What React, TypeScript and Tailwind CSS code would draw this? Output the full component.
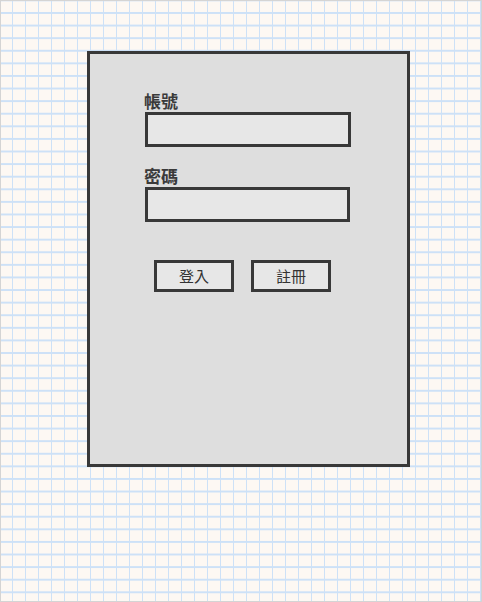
const FONT = "font-['Liberation_Sans','Noto_Sans_CJK_TC',sans-serif]";

function Field({ label, className, w }: { label: string; className?: string; w: string }) {
  return (
    <div className={"flex flex-col " + (className ?? "")}>
      <div className="text-[17px] leading-[16px] font-bold text-[#3a3a3a] mb-px -ml-px">{label}</div>
      <div className={w + " h-[35px] border-[3px] border-[#383838] bg-[#e7e7e7]"} />
    </div>
  );
}

function Btn({ label }: { label: string }) {
  return (
    <button
      type="button"
      className="w-[80px] h-[32px] border-[3px] border-[#383838] bg-[#e7e7e7] text-[15px] leading-none text-[#333] flex items-center justify-center"
    >
      {label}
    </button>
  );
}

export default function App() {
  return (
    <div
      className={
        FONT +
        " w-[482px] h-[602px] border border-[#d4d4d4] bg-[#fdf8f3] bg-[linear-gradient(to_right,#cde1f7_1.5px,transparent_1.5px),linear-gradient(to_bottom,#cde1f7_1.5px,transparent_1.5px)] bg-[size:13px_12.6px] bg-[position:11px_11px] pt-[50px] pl-[86px]"
      }
    >
      <div className="w-[323px] h-[416px] border-[3px] border-[#383838] bg-[#dedede] pt-[41px] pl-[55px]">
        <Field label="帳號" w="w-[206px]" />
        <Field label="密碼" w="w-[205px]" className="mt-[23px]" />
        <div className="flex gap-[17px] mt-[38px] ml-[9px]">
          <Btn label="登入" />
          <Btn label="註冊" />
        </div>
      </div>
    </div>
  );
}
